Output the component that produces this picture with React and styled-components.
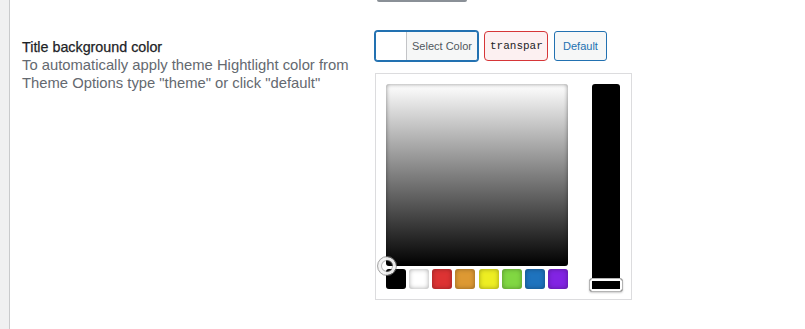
import styled, { createGlobalStyle } from "styled-components";

const palette = ["#000000", "#ffffff", "#dd3333", "#dd9933", "#eeee22", "#81d742", "#1e73be", "#8224e3"];

const GlobalStyle = createGlobalStyle`
  html, body {
    margin: 0;
    padding: 0;
    background: #ffffff;
  }
  body {
    font-family: "Liberation Sans", Arial, sans-serif;
    color: #1d2327;
  }
`;

/**
 * Render the colour option row
 * @return { JSX }
 */

export default function App() {
  return (
    <>
      <GlobalStyle />
      <Page>
        <AdminMenu />
        <Content>
          <Row>
            <span />
            <Field>
              <PrevButtonEdge />
            </Field>
          </Row>

          <OptionRow>
            <Label>
              <Title>Title background color</Title>
              <Description>
                To automatically apply theme Hightlight color from
                <br />
                Theme Options type "theme" or click "default"
              </Description>
            </Label>

            <Field>
              <Controls>
                <ColorResult type="button">
                  <Swatch />
                  <ResultText>Select Color</ResultText>
                </ColorResult>
                <HexInput>transpar</HexInput>
                <DefaultButton type="button">Default</DefaultButton>
              </Controls>

              <Picker>
                <SquareColumn>
                  <Square>
                    <SquareHandle />
                  </Square>
                  <Palette>
                    {palette.map((c) => (
                      <PaletteColor key={c} $color={c} />
                    ))}
                  </Palette>
                </SquareColumn>
                <Strip>
                  <StripHandle />
                </Strip>
              </Picker>
            </Field>
          </OptionRow>
        </Content>
      </Page>
    </>
  );
}

const Page = styled.div`
  display: flex;
  min-height: 100vh;
`;

const AdminMenu = styled.div`
  width: 9px;
  flex-shrink: 0;
  background: #f0f0f1;
  border-right: 1px solid #c9cacc;
`;

const Content = styled.main`
  flex: 1;
  padding-left: 12px;
`;

const Row = styled.div`
  display: grid;
  grid-template-columns: 353px 1fr;
`;

const OptionRow = styled(Row)`
  margin-top: 29px;
`;

const Field = styled.div`
  display: flex;
  flex-direction: column;
  align-items: flex-start;
`;

const PrevButtonEdge = styled.div`
  width: 90px;
  height: 2px;
  margin-left: 2px;
  background: #8a9097;
  border-radius: 0 0 3px 3px;
`;

const Label = styled.div`
  padding-top: 7px;
  line-height: 18px;
`;

const Title = styled.div`
  color: #1d2327;
  font-size: 14.3px;
  -webkit-text-stroke: 0.25px #1d2327;
`;

const Description = styled.p`
  margin: 0;
  color: #646970;
  font-size: 14.8px;
`;

const Controls = styled.div`
  display: flex;
  gap: 6px;
`;

const ColorResult = styled.button`
  display: flex;
  width: 103px;
  height: 30px;
  padding: 0;
  border: 1px solid #2271b1;
  border-radius: 3px;
  box-shadow: 0 0 0 1px #2271b1;
  background: #ffffff;
  overflow: hidden;
  font-family: "Liberation Sans", Arial, sans-serif;
`;

const Swatch = styled.span`
  width: 30px;
  height: 100%;
  background: #ffffff;
`;

const ResultText = styled.span`
  flex: 1;
  border-left: 1px solid #c3c4c7;
  background: #f6f7f7;
  color: #50575e;
  font-size: 11px;
  line-height: 28px;
  text-align: center;
`;

const HexInput = styled.span`
  box-sizing: border-box;
  width: 64px;
  height: 30px;
  padding: 0 5px;
  border: 1px solid #d63638;
  border-radius: 4px;
  background: #fcf0f1;
  color: #1d2327;
  font-family: "Liberation Mono", "DejaVu Sans Mono", monospace;
  font-size: 11px;
  line-height: 28px;
  overflow: hidden;
  white-space: nowrap;
`;

const DefaultButton = styled.button`
  box-sizing: border-box;
  width: 53px;
  height: 30px;
  padding: 0;
  border: 1px solid #2271b1;
  border-radius: 3px;
  background: #f6f7f7;
  color: #2271b1;
  font-family: "Liberation Sans", Arial, sans-serif;
  font-size: 11px;
  line-height: 28px;
`;

const Picker = styled.div`
  display: flex;
  gap: 24px;
  margin-top: 12px;
  padding: 10px 11px 10px 10px;
  border: 1px solid #dcdcde;
  background: #ffffff;
`;

const SquareColumn = styled.div`
  display: flex;
  flex-direction: column;
  gap: 3px;
  width: 182px;
`;

const Square = styled.div`
  position: relative;
  height: 182px;
  border-radius: 3px;
  background: linear-gradient(to bottom, #ffffff 0%, #7f7f7f 50%, #000000 100%);
  box-shadow: inset 0 0 4px rgba(0, 0, 0, 0.45);
`;

const SquareHandle = styled.span`
  position: absolute;
  left: -9px;
  top: 172px;
  width: 20px;
  height: 20px;
  box-sizing: border-box;
  border-radius: 50%;
  border: 1px solid rgba(128, 128, 128, 0.7);
  box-shadow: inset 0 0 0 3px rgba(249, 249, 249, 0.9),
    inset 0 0 0 4px rgba(128, 128, 128, 0.55);
  z-index: 2;
`;

const Palette = styled.div`
  display: flex;
  justify-content: space-between;
`;

const PaletteColor = styled.span`
  width: 20px;
  height: 20px;
  border-radius: 3px;
  background: ${(props) => props.$color};
  box-shadow: inset 0 0 5px rgba(0, 0, 0, 0.35);
`;

const Strip = styled.div`
  position: relative;
  width: 28px;
  height: 204px;
  border-radius: 3px;
  background: #000000;
`;

const StripHandle = styled.span`
  position: absolute;
  left: -3px;
  right: -3px;
  top: 194px;
  height: 14px;
  box-sizing: border-box;
  border: 1px solid #b4b4b4;
  border-radius: 3px;
  background: #000000;
  box-shadow: inset 0 0 0 2px #ffffff, 0 1px 2px rgba(0, 0, 0, 0.2);
`;
